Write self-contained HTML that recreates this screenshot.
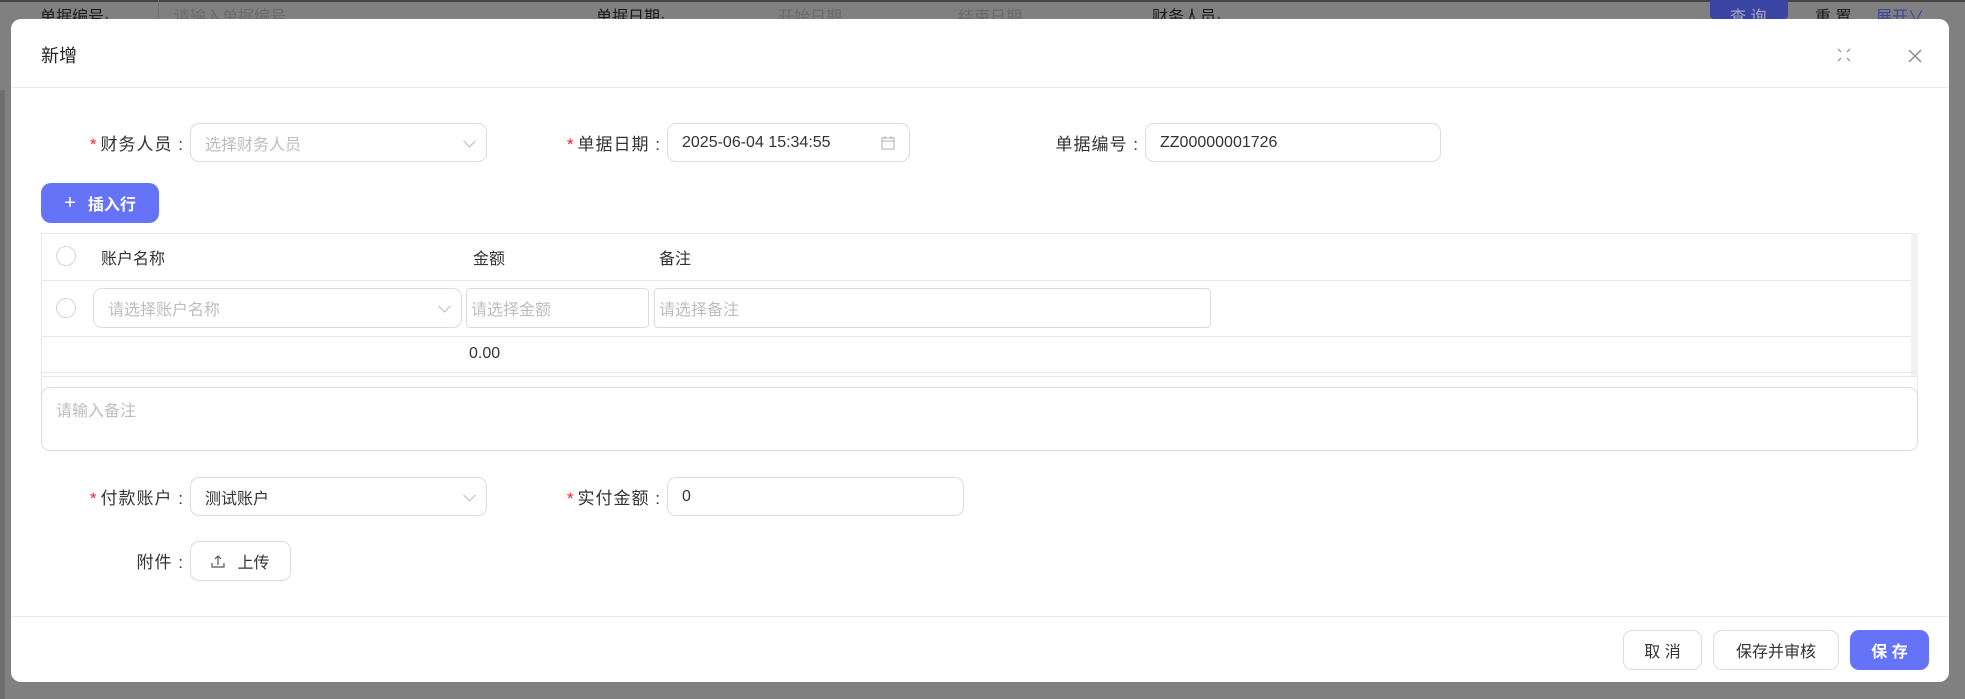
<!DOCTYPE html>
<html><head><meta charset="utf-8"><style>
*{box-sizing:border-box;margin:0;padding:0}
body{width:1965px;height:699px;overflow:hidden;background:#808080;font-family:"Liberation Sans","Noto Sans CJK SC",sans-serif;position:relative;color:#333}
.a{position:absolute}
.bg{color:#1a1a1a;font-size:16px}
.modal{position:absolute;left:11px;top:19px;width:1938px;height:663px;background:#fff;border-radius:10px}
.inp{position:absolute;border:1px solid #dcdcdc;border-radius:9px;background:#fff;font-size:16px;display:flex;align-items:center;padding-left:14px;color:#333}
.ph{color:#bdbdbd}
.lbl{position:absolute;font-size:16px;color:#333;white-space:nowrap}
.fl{position:absolute;font-size:17px;color:#333;white-space:nowrap;text-align:right;width:160px;letter-spacing:1px}
.star{color:#f5222d;margin-right:3px}
.chev{position:absolute;right:12px;top:50%;width:9px;height:9px;border-right:1px solid #bbb;border-bottom:1px solid #bbb;transform:translateY(-70%) rotate(45deg)}
.btn{position:absolute;border:1px solid #dcdcdc;border-radius:9px;background:#fff;font-size:16px;display:flex;align-items:center;justify-content:center;color:#333}
.circ{position:absolute;width:20px;height:20px;border:1px solid #d5d5d5;border-radius:50%}
</style></head><body>
<div class="a" style="left:0;top:0;width:1965px;height:2px;background:#444"></div>
<div class="a bg" style="left:40px;top:3px">单据编号·</div>
<div class="a" style="left:158px;top:0;width:1px;height:19px;background:#6f6f6f"></div>
<div class="a bg" style="left:174px;top:3px;color:#6a6a6a">请输入单据编号</div>
<div class="a bg" style="left:596px;top:3px">单据日期·</div>
<div class="a bg" style="left:778px;top:3px;color:#6a6a6a">开始日期</div>
<div class="a bg" style="left:958px;top:3px;color:#6a6a6a">结束日期</div>
<div class="a bg" style="left:1152px;top:3px">财务人员·</div>
<div class="a" style="left:1710px;top:0;width:78px;height:19px;background:#3a45a3;border-radius:0 0 4px 4px"></div>
<div class="a bg" style="left:1730px;top:3px;color:#aab">查 询</div>
<div class="a bg" style="left:1815px;top:3px">重 置</div>
<div class="a bg" style="left:1876px;top:3px;color:#3a45a3">展开∨</div>
<div class="a" style="left:0;top:90px;width:5px;height:609px;background:#6e6e6e"></div>

<div class="modal">
  <div class="a" style="left:30px;top:23px;font-size:18px;color:#222">新增</div>
  <svg class="a" style="left:1826px;top:29px" width="14" height="14" viewBox="0 0 14 14" fill="none" stroke="#999" stroke-width="1.3"><path d="M1 1l3 3M13 1l-3 3M1 13l3-3M13 13l-3-3"/></svg>
  <svg class="a" style="left:1897px;top:30px" width="14" height="14" viewBox="0 0 14 14" fill="none" stroke="#888" stroke-width="1.4"><path d="M1 1l12 12M13 1L1 13"/></svg>
  <div class="a" style="left:0;top:68px;width:1938px;height:1px;background:#e8e8e8"></div>

  <div class="fl" style="left:13px;top:111px"><span class="star">*</span>财务人员 :</div>
  <div class="inp" style="left:179px;top:104px;width:297px;height:39px"><span class="ph">选择财务人员</span><i class="chev"></i></div>
  <div class="fl" style="left:490px;top:111px"><span class="star">*</span>单据日期 :</div>
  <div class="inp" style="left:656px;top:104px;width:243px;height:39px">2025-06-04 15:34:55
    <svg class="a" style="right:14px;top:12px" width="14" height="14" viewBox="0 0 14 14" fill="none" stroke="#bbb" stroke-width="1.2"><rect x="1" y="2" width="12" height="11"/><path d="M1 5h12M4 0v3M10 0v3"/></svg></div>
  <div class="fl" style="left:968px;top:111px">单据编号 :</div>
  <div class="inp" style="left:1134px;top:104px;width:296px;height:39px">ZZ00000001726</div>

  <div class="a" style="left:30px;top:164px;width:118px;height:40px;background:#6473f7;border-radius:10px;color:#fff;font-size:16px;display:flex;align-items:center;justify-content:center;font-weight:bold"><span style="font-weight:normal;font-size:20px;margin-right:12px">+</span>插入行</div>

  <div class="a" style="left:30px;top:214px;width:1877px;height:162px;border:1px solid #e8e8e8;border-bottom:none"></div>
  <div class="a" style="left:1900px;top:214px;width:7px;height:143px;background:#f2f2f2"></div>
  <div class="circ" style="left:45px;top:227px"></div>
  <div class="lbl" style="left:90px;top:226px">账户名称</div>
  <div class="lbl" style="left:462px;top:226px">金额</div>
  <div class="lbl" style="left:648px;top:226px">备注</div>
  <div class="a" style="left:30px;top:261px;width:1870px;height:1px;background:#e8e8e8"></div>
  <div class="circ" style="left:45px;top:279px"></div>
  <div class="inp" style="left:82px;top:269px;width:369px;height:40px;padding-left:14px"><span class="ph">请选择账户名称</span><i class="chev"></i></div>
  <div class="inp" style="left:455px;top:269px;width:183px;height:40px;padding-left:4px;border-radius:4px"><span class="ph">请选择金额</span></div>
  <div class="inp" style="left:643px;top:269px;width:557px;height:40px;padding-left:4px;border-radius:4px"><span class="ph">请选择备注</span></div>
  <div class="a" style="left:30px;top:317px;width:1870px;height:1px;background:#e8e8e8"></div>
  <div class="lbl" style="left:458px;top:326px">0.00</div>
  <div class="a" style="left:30px;top:353px;width:1877px;height:1px;background:#e8e8e8"></div>
  <div class="a" style="left:30px;top:357px;width:1877px;height:1px;background:#e8e8e8"></div>

  <div class="inp" style="left:30px;top:368px;width:1877px;height:64px;align-items:flex-start;padding-top:9px"><span class="ph">请输入备注</span></div>

  <div class="fl" style="left:13px;top:465px"><span class="star">*</span>付款账户 :</div>
  <div class="inp" style="left:179px;top:458px;width:297px;height:39px">测试账户<i class="chev"></i></div>
  <div class="fl" style="left:490px;top:465px"><span class="star">*</span>实付金额 :</div>
  <div class="inp" style="left:656px;top:458px;width:297px;height:39px">0</div>
  <div class="fl" style="left:13px;top:529px">附件 :</div>
  <div class="btn" style="left:179px;top:522px;width:101px;height:40px">
    <svg width="14" height="14" viewBox="0 0 14 14" fill="none" stroke="#555" stroke-width="1.2" style="margin-right:12px"><path d="M7 11V2M4 5l3-3 3 3M1 9v4h12V9"/></svg>上传</div>

  <div class="a" style="left:0;top:597px;width:1938px;height:1px;background:#e8e8e8"></div>
  <div class="btn" style="left:1612px;top:611px;width:79px;height:40px">取 消</div>
  <div class="btn" style="left:1702px;top:611px;width:126px;height:40px">保存并审核</div>
  <div class="btn" style="left:1839px;top:611px;width:79px;height:40px;background:#6473f7;border-color:#6473f7;color:#fff;font-weight:bold">保 存</div>
</div>
</body></html>
